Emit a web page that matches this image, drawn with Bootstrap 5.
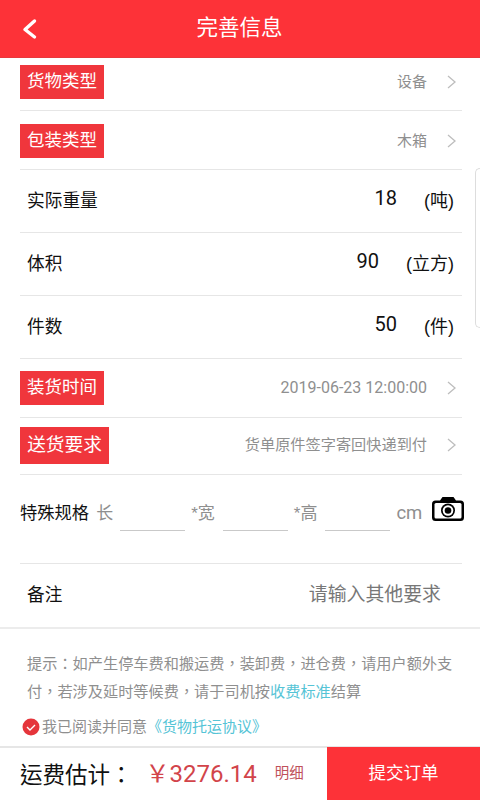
<!DOCTYPE html>
<html lang="zh"><head><meta charset="utf-8">
<link href="https://cdn.jsdelivr.net/npm/bootstrap@5.3.0/dist/css/bootstrap.min.css" rel="stylesheet">
<style>
html,body{width:480px;height:800px;overflow:hidden;background:#fff}
body{font-family:"Liberation Sans","Noto Sans CJK SC",sans-serif;color:#111;position:relative}
.topbar{height:58px;background:#fd3238;color:#fff;padding-bottom:0;border-bottom:1px solid #e8383c}
.topbar .ttl{font-size:21.500px;line-height:1;margin-left:-1px}
.backbtn{position:absolute;left:21px;top:16px}
.formarea{padding:0 18px 0 20px}
.rowline{border-bottom:1px solid #e6e6e6}
.r-first{height:53px;padding:7px 0 11px}
.r-tag{height:59px}
.r-second{padding-top:2px}
.r-tag2{height:57px;padding-bottom:1px}
.r-plain{height:63px;padding:0 8px 0 7px;font-size:17.700px}
.redtag{background:#f0363c;color:#fff;font-size:17.500px;height:34px;line-height:32px;width:84px;text-align:center;white-space:nowrap}
.redtag-lg{font-size:18.700px;height:37px;line-height:35px;width:89px}
.val{color:#8f8f8f;font-size:15px}
.val-time{font-family:Roboto,"Noto Sans CJK SC",sans-serif;font-size:16px}
.val-long{font-size:15.200px}
.chev{margin:0 6px 0 20px;display:block}
.num{font-family:Roboto,sans-serif;font-size:20px;margin-bottom:6px}
.unit{font-size:18px;margin-left:27px}
.specrow{height:89px;padding-bottom:10px;font-size:17px}
.speclabel{color:#111;font-size:17.300px}
.specgray{color:#8f8f8f;margin-left:6px}
.specfirst{margin-left:7px}
.dimbox{display:block;width:65px;height:24px;border-bottom:1px solid #c9c9c9;margin:10px 0 0 8px}
.dimfirst{margin-left:7px}
.cmtxt{font-family:Roboto,sans-serif;font-size:18.500px}
.cam{margin:0 -2px 10px auto;display:block}
.remark{height:63px;padding:0 21px 0 7px;font-size:17.700px}
.remark .ph{color:#777;font-size:18.900px}
.tips{border-top:2px solid #ececec;padding:21px 20px 0 27px;font-size:15.200px;line-height:28px;color:#8f8f8f}
.pct{font-family:"Noto Sans CJK TC",sans-serif;line-height:0}
.linkc{color:#55c4d6}
.agree{padding:0 0 0 22px;font-size:15px;color:#8f8f8f;height:42px;gap:2px}
.footbar{position:absolute;left:0;right:0;bottom:0;height:54px;border-top:2px solid #e6e6e6;background:#fff}
.footbar .lbl{font-size:22.500px;margin-left:20px;color:#111;white-space:nowrap;font-family:"Noto Sans CJK TC",sans-serif}
.price{color:#d2444a;font-family:Roboto,"Noto Sans CJK SC",sans-serif;font-size:24px;margin-left:13px;white-space:nowrap}
.detail{color:#c0505a;font-size:14.500px;margin-left:18px;white-space:nowrap}
.submit{width:153px;height:54px;margin-top:-1px;background:#fd3238;color:#fff;font-size:17.500px;border:0;border-radius:0;margin-left:auto;flex:none}
.sidetab{position:absolute;right:0;top:168px;width:5px;height:160px;border:1px solid #ddd;border-right:0;border-radius:5px 0 0 5px}
</style></head><body>
<header class="topbar d-flex align-items-center justify-content-center">
<svg class="backbtn" width="18" height="26" viewBox="0 0 18 26" fill="none" stroke="#fff" stroke-width="3.400" stroke-linecap="round" stroke-linejoin="round"><path d="M13.500 5 4 13.500 13.500 21"/></svg>
<span class="ttl">完善信息</span>
</header>
<div class="formarea">
<div class="rowline r-first d-flex align-items-center justify-content-between"><span class="redtag">货物类型</span><span class="d-flex align-items-center val">设备<svg class="chev" width="9" height="16" viewBox="0 0 9 16" fill="none" stroke="#bdbdbd" stroke-width="1.300"><path d="M1 2l7 6-7 6"/></svg></span></div>
<div class="rowline r-tag r-second d-flex align-items-center justify-content-between"><span class="redtag">包装类型</span><span class="d-flex align-items-center val">木箱<svg class="chev" width="9" height="16" viewBox="0 0 9 16" fill="none" stroke="#bdbdbd" stroke-width="1.300"><path d="M1 2l7 6-7 6"/></svg></span></div>
<div class="rowline r-plain d-flex align-items-center justify-content-between"><span>实际重量</span><span class="d-flex align-items-center"><span class="num">18</span><span class="unit">(吨)</span></span></div>
<div class="rowline r-plain d-flex align-items-center justify-content-between"><span>体积</span><span class="d-flex align-items-center"><span class="num">90</span><span class="unit">(立方)</span></span></div>
<div class="rowline r-plain d-flex align-items-center justify-content-between"><span>件数</span><span class="d-flex align-items-center"><span class="num">50</span><span class="unit">(件)</span></span></div>
<div class="rowline r-tag d-flex align-items-center justify-content-between"><span class="redtag">装货时间</span><span class="d-flex align-items-center val val-time">2019-06-23 12:00:00<svg class="chev" width="9" height="16" viewBox="0 0 9 16" fill="none" stroke="#bdbdbd" stroke-width="1.300"><path d="M1 2l7 6-7 6"/></svg></span></div>
<div class="rowline r-tag2 d-flex align-items-center justify-content-between"><span class="redtag redtag-lg">送货要求</span><span class="d-flex align-items-center val val-long">货单原件签字寄回快递到付<svg class="chev" width="9" height="16" viewBox="0 0 9 16" fill="none" stroke="#bdbdbd" stroke-width="1.300"><path d="M1 2l7 6-7 6"/></svg></span></div>
<div class="rowline specrow d-flex align-items-center">
<span class="speclabel">特殊规格</span><span class="specgray specfirst">长</span>
<span class="dimbox dimfirst"></span><span class="specgray">*宽</span>
<span class="dimbox"></span><span class="specgray">*高</span>
<span class="dimbox"></span><span class="specgray cmtxt">cm</span>
<svg class="cam" width="32" height="24" viewBox="0 0 32 24"><path fill="#000" d="M10.500 0h11l2.500 3.500h4.500a3.500 3.500 0 0 1 3.500 3.500v13.500a3.500 3.500 0 0 1-3.500 3.500h-25A3.500 3.500 0 0 1 0 20.500V7a3.500 3.500 0 0 1 3.500-3.500H8z"/><rect x="2.500" y="6" width="27" height="15.500" rx="1.500" fill="#fff"/><circle cx="16" cy="13.500" r="7" fill="#000"/><circle cx="16" cy="13.500" r="5.300" fill="#fff"/><circle cx="16" cy="13.500" r="3.300" fill="#000"/></svg>
</div>
<div class="remark d-flex align-items-center justify-content-between"><span>备注</span><span class="ph">请输入其他要求</span></div>
</div>
<div class="tips">提示<span class="pct" lang="zh-Hant">：</span>如产生停车费和搬运费<span class="pct" lang="zh-Hant">，</span>装卸费<span class="pct" lang="zh-Hant">，</span>进仓费<span class="pct" lang="zh-Hant">，</span>请用户额外支付<span class="pct" lang="zh-Hant">，</span>若涉及延时等候费<span class="pct" lang="zh-Hant">，</span>请于司机按<span class="linkc">收费标准</span>结算</div>
<div class="agree d-flex align-items-center"><svg width="18" height="18" viewBox="0 0 18 18"><circle cx="9" cy="9" r="8.500" fill="#e5353b"/><path d="M5 9l3 3 5-5" fill="none" stroke="#fff" stroke-width="1.400"/></svg><span>我已阅读并同意<span class="linkc">《货物托运协议》</span></span></div>
<div class="footbar d-flex align-items-center">
<span class="lbl" lang="zh-Hant">运费估计：</span><span class="price">￥3276.14</span><span class="detail">明细</span>
<button class="btn submit" type="button">提交订单</button>
</div>
<div class="sidetab"></div>
<script src="https://cdn.jsdelivr.net/npm/bootstrap@5.3.0/dist/js/bootstrap.bundle.min.js"></script>
</body></html>
